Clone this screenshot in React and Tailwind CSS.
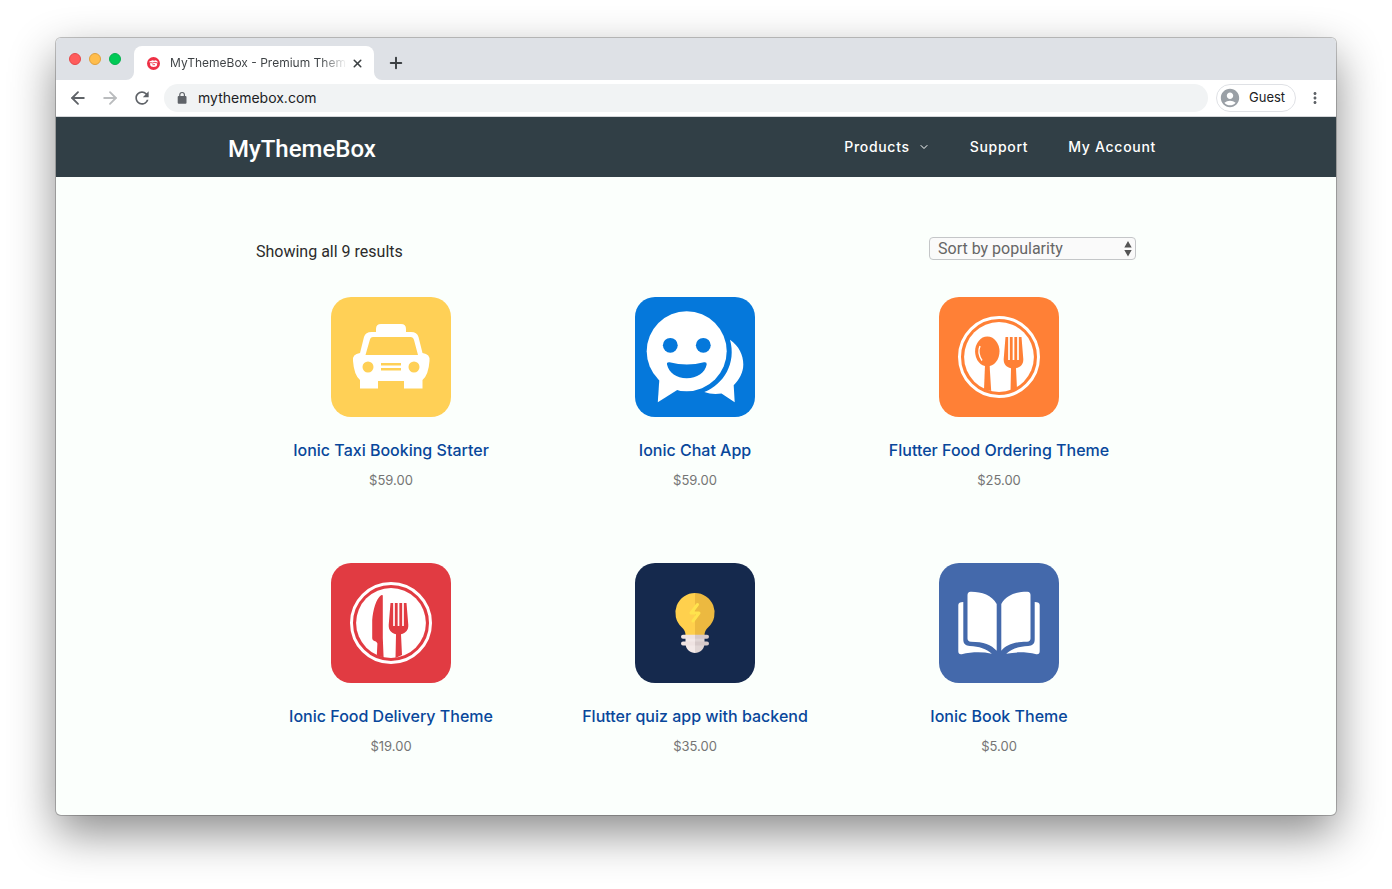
import { ArrowLeft, ArrowRight, ChevronDown, Plus, X } from 'lucide-react';
import { MdAccountCircle, MdMoreVert, MdRefresh } from 'react-icons/md';

function TaxiIcon() {
  return (
    <svg viewBox="0 0 120 120" className="size-full" aria-hidden="true">
      <path
        fill="#fff"
        fillRule="evenodd"
        d="M45 35v-3q0-5 5-5h20q5 0 5 5v3h5q6 0 7.500 5l4 16q8 1 7 8-1 14-7 19v8.500H73V84H47v7.500H29V83q-6-5-7-19-1-7 7-8l4-16q1.500-5 7.500-5zM42 40q-2.500 0-3.200 3L34.500 58H87l-4-15q-.8-3-3.500-3zM31.500 70a5.500 5.500 0 1 0 11 0 5.500 5.500 0 1 0-11 0zM77.500 70a5.500 5.500 0 1 0 11 0 5.500 5.500 0 1 0-11 0zM50 66h20v2.500H50zM50 71h20v2.500H50z"
      />
    </svg>
  );
}

function ChatIcon() {
  return (
    <svg viewBox="0 0 120 120" className="size-full" aria-hidden="true">
      <g fill="#fff">
        <circle cx="51.700" cy="54.300" r="40" />
        <path d="M24.500 80l-1.700 25.300L43 92.500z" />
        <path d="M95 42.700C104 49 108.300 58 108.300 67.500c0 8-4 15-9.600 20.800l1 17L86.500 96.500c-6 .8-12 .5-17.200-1.500C89 87 101.500 66 95 42.700z" />
      </g>
      <g fill="#0578db">
        <circle cx="35.300" cy="48.300" r="7.400" />
        <circle cx="68.300" cy="48.300" r="7.400" />
        <path d="M34.500 65.300q17.500 4.500 34.500 0 3-.5 2.700 2.200C70 76 62 81.200 51.700 81.200S34 76 32 67.500q-.5-2.500 2.500-2.200z" />
      </g>
    </svg>
  );
}

function Fork({ x = 0 }) {
  return (
    <g transform={`translate(${x} 0)`}>
      <path
        fill="currentColor"
        d="M66.500 40h16l1.800 22c.2 5-2.300 8-7.300 9.200L78 92l-6.500 3 .5-23.800c-5-1.200-7.500-4.200-7.300-9.200z"
      />
      <path stroke="#fff" strokeWidth="1.700" d="M70 39.500V63M74.500 39.500V63M79 39.500V63" />
    </g>
  );
}

function Plate({ children }) {
  return (
    <svg viewBox="0 0 120 120" className="size-full" aria-hidden="true">
      <circle cx="60" cy="60" r="39.500" fill="none" stroke="#fff" strokeWidth="3" />
      <circle cx="60" cy="60" r="34.900" fill="#fff" />
      {children}
    </svg>
  );
}

function SpoonPlateIcon() {
  return (
    <Plate>
      <ellipse cx="48.300" cy="54.500" rx="12.200" ry="14.900" fill="currentColor" />
      <path fill="currentColor" d="M46 68h4.600l1.600 26-7.200-1.500z" />
      <path d="M41 49q-3 7 2 14.500" fill="none" stroke="#fff" strokeWidth="1.400" />
      <Fork />
    </Plate>
  );
}

function KnifePlateIcon() {
  return (
    <Plate>
      <path
        fill="currentColor"
        d="M51.800 32.500V75l.8 19.500-6.800-2 .6-12c-1-3-5.200-2-5.200-5.500V57C42 47 45 36 50 32.300q1.500-.8 1.800.2z"
      />
      <Fork x={-7} />
    </Plate>
  );
}

function BulbIcon() {
  return (
    <svg viewBox="0 0 120 120" className="size-full" aria-hidden="true">
      <path fill="#ffd04d" d="M60 30a19.700 19.700 0 0 0-13.500 34c3 2.800 4 5 4 8H60z" />
      <path fill="#ecb940" d="M60 30a19.700 19.700 0 0 1 13.500 34c-3 2.800-4 5-4 8H60z" />
      <path d="M62.500 41.500l-6.500 8.500h8l-6 8" fill="none" stroke="#ffe34d" strokeWidth="3" strokeLinecap="round" strokeLinejoin="round" />
      <path fill="#f3e9e8" d="M50.500 75H60v15c-5 0-9-3.500-9.500-9z" />
      <path fill="#e0d5d4" d="M60 75h9.500v6c-.5 5.500-4.500 9-9.500 9z" />
      <path fill="#efe3e2" d="M48 71.800h12v4H48a2 2 0 0 1 0-4zM48 78.500h12v4H48a2 2 0 0 1 0-4z" />
      <path fill="#d6c9c9" d="M60 71.800h12a2 2 0 0 1 0 4H60zM60 78.500h12a2 2 0 0 1 0 4H60z" />
    </svg>
  );
}

function BookHalf() {
  return (
    <>
      <path d="M31.500 28.700C42 28.500 53 32 57.700 41v46.700c-5.500-6-13-9-25.700-9q-3.500-.2-3.500-3.200V32q0-3 3-3.300z" />
      <path d="M24.300 39v37.500c0 4.500 2.500 6.300 6.500 6.500 9.500.5 16.500 2.700 22 7.700-10-2-20-1.700-30 .5q-3.500.5-3.500-3V42q0-3 5-3z" />
    </>
  );
}

function BookIcon() {
  return (
    <svg viewBox="0 0 120 120" className="size-full" fill="#fff" aria-hidden="true">
      <BookHalf />
      <g transform="translate(120 0) scale(-1 1)">
        <BookHalf />
      </g>
    </svg>
  );
}

const PRODUCTS = [
  { name: 'Ionic Taxi Booking Starter', price: '$59.00', icon: TaxiIcon, tile: 'bg-[#ffd056]' },
  { name: 'Ionic Chat App', price: '$59.00', icon: ChatIcon, tile: 'bg-[#0578db]' },
  { name: 'Flutter Food Ordering Theme', price: '$25.00', icon: SpoonPlateIcon, tile: 'bg-[#ff8036] text-[#ff8036]' },
  { name: 'Ionic Food Delivery Theme', price: '$19.00', icon: KnifePlateIcon, tile: 'bg-[#e13b42] text-[#e13b42]' },
  { name: 'Flutter quiz app with backend', price: '$35.00', icon: BulbIcon, tile: 'bg-[#15294d]' },
  { name: 'Ionic Book Theme', price: '$5.00', icon: BookIcon, tile: 'bg-[#4469ab]' },
];

function Favicon() {
  return (
    <svg viewBox="0 0 13 13" className="size-[13px] shrink-0" aria-hidden="true">
      <circle cx="6.500" cy="6.500" r="6.500" fill="#ee3045" />
      <path fill="#fff" d="M2.200 4.600l3.500-1.400 1.300.6 2-.5 1.900 1.700-.8.700v2.500q-.3 1.700-3.400 1.700T3.200 8.300V6.200z" />
      <path d="M3.200 5.500l2.800.6 1-.8 3 .5M5.500 7.700h2.500" stroke="#ee3045" strokeWidth=".9" fill="none" />
    </svg>
  );
}

function LockIcon() {
  return (
    <svg viewBox="0 0 12 14" className="h-3.5 w-3" aria-hidden="true">
      <rect x="1.700" y="5" width="8.800" height="7.700" rx="1" fill="currentColor" />
      <path d="M3.800 5.500V3.800a2.300 2.300 0 0 1 4.600 0v1.700" fill="none" stroke="currentColor" strokeWidth="1.200" />
    </svg>
  );
}

function TabStrip() {
  return (
    <div className="flex h-[42px] items-end bg-[#dee1e6]">
      <div className="flex gap-2 self-center pl-[13px]">
        <button aria-label="Close window" className="size-3 rounded-full border border-[#e5484a] bg-[#ff5c5c]" />
        <button aria-label="Minimize window" className="size-3 rounded-full border border-[#e0a03c] bg-[#ffbd4c]" />
        <button aria-label="Zoom window" className="size-3 rounded-full border border-[#06b050] bg-[#00ca56]" />
      </div>
      <div className="ml-[5px] flex items-end">
        <svg viewBox="0 0 8 8" className="size-2" fill="#fff" aria-hidden="true">
          <path d="M8 0v8H0a8 8 0 0 0 8-8z" />
        </svg>
        <div className="flex h-[34px] w-60 items-center rounded-t-lg bg-white pr-2.5 pl-[13px]">
          <Favicon />
          <span className="ml-2.5 flex-1 overflow-hidden bg-linear-to-r from-[#3c4043] from-85% to-transparent bg-clip-text text-xs whitespace-nowrap text-transparent">
            MyThemeBox - Premium Them
          </span>
          <button aria-label="Close tab" className="ml-1 text-[#3c4043]">
            <X size={13} strokeWidth={2.8} />
          </button>
        </div>
        <svg viewBox="0 0 8 8" className="size-2" fill="#fff" aria-hidden="true">
          <path d="M0 0v8h8a8 8 0 0 1-8-8z" />
        </svg>
      </div>
      <button aria-label="New tab" className="mb-2 ml-[5px] text-[#3c4043]">
        <Plus size={18} strokeWidth={2.6} />
      </button>
    </div>
  );
}

function Toolbar() {
  return (
    <div className="flex h-[37px] items-center border-b border-[#d5d7da] bg-white pr-3 pl-3 text-[#5f6368]">
      <button aria-label="Back">
        <ArrowLeft size={20} strokeWidth={2.2} />
      </button>
      <button aria-label="Forward" className="ml-3 text-[#babcbe]">
        <ArrowRight size={20} strokeWidth={2.2} />
      </button>
      <button aria-label="Reload" className="ml-3">
        <MdRefresh size={20} />
      </button>
      <div className="ml-3 flex h-7 flex-1 items-center rounded-full bg-[#f1f3f4] px-3">
        <LockIcon />
        <input
          type="text"
          aria-label="Address"
          defaultValue="mythemebox.com"
          className="ml-2.5 flex-1 bg-transparent text-sm text-[#202124] outline-none"
        />
      </div>
      <button className="ml-2 flex h-7 w-20 items-center rounded-full border border-[#dfe1e5] pl-0.5 text-[13px] text-[#202124]">
        <MdAccountCircle size={22} className="mr-2 text-[#9aa0a6]" />
        Guest
      </button>
      <button aria-label="Menu" className="ml-2.5">
        <MdMoreVert size={18} />
      </button>
    </div>
  );
}

function SiteHeader() {
  return (
    <header className="bg-[#313f46] px-6 text-white">
      <div className="mx-auto flex h-[60px] max-w-[936px] items-center justify-between pr-2">
        <a href="#" className="pt-1 font-['Roboto','Inter',sans-serif] text-2xl font-medium">
          MyThemeBox
        </a>
        <nav className="flex gap-10 text-sm font-medium tracking-wider">
          <a href="#products" className="flex items-center">
            Products
            <ChevronDown size={12} strokeWidth={2} className="ml-2" />
          </a>
          <a href="#support">Support</a>
          <a href="#account">My Account</a>
        </nav>
      </div>
    </header>
  );
}

function SortSelect() {
  return (
    <div className="relative">
      <select
        aria-label="Shop order"
        className="block h-[23px] w-[207px] appearance-none rounded border border-[#c4c6c8] bg-[#fafafa] pr-5 pl-2 text-base leading-5 text-[#666]"
      >
        <option>Sort by popularity</option>
      </select>
      <svg viewBox="0 0 8 16" className="pointer-events-none absolute top-1 right-1 h-4 w-2" fill="#555" aria-hidden="true">
        <path d="M4 0l3.700 6.500H.3zM4 15.500L.3 9h7.400z" />
      </svg>
    </div>
  );
}

function ProductCard({ product }) {
  const Icon = product.icon;
  return (
    <li className="flex flex-col items-center text-center">
      <a href="#product" className="flex flex-col items-center">
        <span className={`block size-[120px] overflow-hidden rounded-[20px] ${product.tile}`}>
          <Icon />
        </span>
        <h2 className="mt-[21px] text-base leading-6 font-medium text-[#08479b]">{product.name}</h2>
      </a>
      <span className="mt-2 text-[13px] leading-5 text-[#757575]">{product.price}</span>
    </li>
  );
}

export default function App() {
  return (
    <div className="flex min-h-screen flex-col bg-white px-14 pt-[38px] pb-[74px] font-['Inter','Liberation_Sans',sans-serif]">
      <div className="flex flex-1 flex-col overflow-hidden rounded-[5px] bg-[#fbfffc] shadow-[0_0_0_1px_rgba(0,0,0,0.22),0_18px_46px_rgba(0,0,0,0.46)]">
        <TabStrip />
        <Toolbar />
        <SiteHeader />
        <main className="mx-auto w-full max-w-[880px] pt-[60px]">
          <div className="flex items-start justify-between font-['Roboto','Inter',sans-serif]">
            <p className="pt-[3px] text-base leading-6 text-[#2b2b2b]">Showing all 9 results</p>
            <SortSelect />
          </div>
          <ul className="mt-[33px] grid grid-cols-3 gap-x-[34px] gap-y-[73px] pr-0.5 pb-[50px]">
            {PRODUCTS.map((product) => (
              <ProductCard key={product.name} product={product} />
            ))}
          </ul>
        </main>
      </div>
    </div>
  );
}
